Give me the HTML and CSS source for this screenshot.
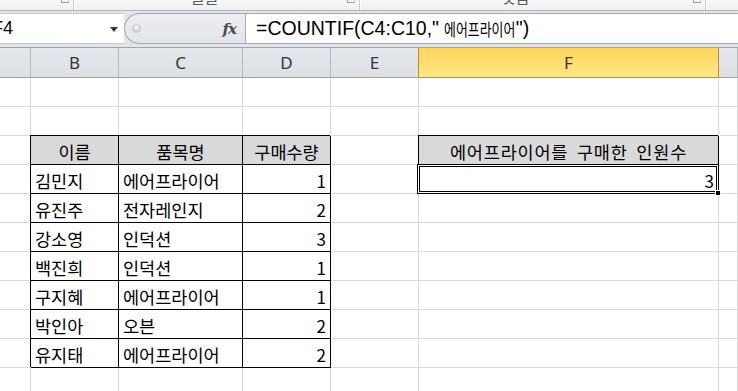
FILE: index.html
```html
<!DOCTYPE html>
<html lang="ko">
<head>
<meta charset="utf-8">
<link rel="stylesheet" href="styles.css">
</head>
<body>
<div class="app">
  <div class="ribbon">
    <div class="rg rg1"><span class="launch"></span></div>
    <div class="rg rg2"><span class="rlabel">글꼴</span><span class="launch"></span></div>
    <div class="rg rg3"><span class="rlabel">맞춤</span><span class="launch"></span></div>
    <div class="rg rg4"></div>
  </div>
  <div class="fbar">
    <div class="namebox"><span class="nb-text">F4</span><span class="nb-arrow"></span></div>
    <div class="pill"><span class="pill-dot"></span><span class="fx">fx</span></div>
    <div class="formula"><span>=COUNTIF(C4:C10,"</span><span class="ko">에어프라이어</span><span>")</span></div>
  </div>
  <div class="sheet">
    <div class="ch"></div><div class="ch">B</div><div class="ch">C</div><div class="ch">D</div><div class="ch">E</div><div class="ch sel">F</div><div class="ch"></div>

    <div class="c"></div><div class="c"></div><div class="c"></div><div class="c"></div><div class="c"></div><div class="c"></div><div class="c"></div>
    <div class="c"></div><div class="c"></div><div class="c"></div><div class="c"></div><div class="c"></div><div class="c"></div><div class="c"></div>

    <div class="c"></div><div class="c t th">이름</div><div class="c t th">품목명</div><div class="c t th">구매수량</div><div class="c"></div><div class="c t th wide">에어프라이어를 구매한 인원수</div><div class="c"></div>

    <div class="c"></div><div class="c t">김민지</div><div class="c t">에어프라이어</div><div class="c t num">1</div><div class="c"></div><div class="c t num active">3<span class="selbox"></span><span class="handle"></span></div><div class="c"></div>
    <div class="c"></div><div class="c t">유진주</div><div class="c t">전자레인지</div><div class="c t num">2</div><div class="c"></div><div class="c"></div><div class="c"></div>
    <div class="c"></div><div class="c t">강소영</div><div class="c t">인덕션</div><div class="c t num">3</div><div class="c"></div><div class="c"></div><div class="c"></div>
    <div class="c"></div><div class="c t">백진희</div><div class="c t">인덕션</div><div class="c t num">1</div><div class="c"></div><div class="c"></div><div class="c"></div>
    <div class="c"></div><div class="c t">구지혜</div><div class="c t">에어프라이어</div><div class="c t num">1</div><div class="c"></div><div class="c"></div><div class="c"></div>
    <div class="c"></div><div class="c t">박인아</div><div class="c t">오븐</div><div class="c t num">2</div><div class="c"></div><div class="c"></div><div class="c"></div>
    <div class="c"></div><div class="c t">유지태</div><div class="c t">에어프라이어</div><div class="c t num">2</div><div class="c"></div><div class="c"></div><div class="c"></div>

    <div class="c"></div><div class="c"></div><div class="c"></div><div class="c"></div><div class="c"></div><div class="c"></div><div class="c"></div>
  </div>
</div>
</body>
</html>
```

FILE: styles.css
```css
* { box-sizing: border-box; }
html, body { margin: 0; padding: 0; }
body {
  width: 738px;
  height: 391px;
  overflow: hidden;
  background: #fff;
  font-family: "Noto Sans CJK KR", "Noto Sans", sans-serif;
}
.app { width: 738px; height: 391px; overflow: hidden; }

/* ribbon remnant */
.ribbon {
  height: 11px;
  display: flex;
  background: linear-gradient(#f6f7f8, #eef0f2);
  border-bottom: 1px solid #b3b7bc;
  overflow: hidden;
}
.rg {
  position: relative;
  display: flex;
  justify-content: flex-end;
  border-right: 1px solid #c9ccd0;
  box-shadow: 1px 0 0 #fafbfc;
}
.rg1 { width: 74px; padding-right: 4px; }
.rg2 { width: 286px; padding-right: 4px; }
.rg3 { width: 346px; padding-right: 4px; }
.rg4 { flex: 1; border-right: 0; box-shadow: none; }
.rlabel {
  margin-right: auto;
  margin-top: -12px;
  font-size: 15px;
  line-height: 17px;
  color: #5a5a5a;
}
.rg2 .rlabel { padding-left: 117px; }
.rg3 .rlabel { padding-left: 142px; }
.launch {
  width: 8px;
  height: 3px;
  border-left: 1px solid #9a9ea3;
  border-bottom: 1px solid #9a9ea3;
  border-right: 1px solid #c4c7cb;
}

/* formula bar */
.fbar {
  height: 37px;
  display: flex;
  padding: 2px 0 2px 0;
  background: #e1e4e8;
  border-bottom: 1px solid #a1a5aa;
}
.namebox {
  width: 124px;
  height: 31px;
  background: #fff;
  border-top: 1px solid #c3c6ca;
  border-bottom: 1px solid #c3c6ca;
  display: flex;
  align-items: center;
  justify-content: space-between;
  overflow: hidden;
  font-family: "Liberation Sans", sans-serif;
  font-size: 18px;
}
.nb-text { margin-left: -8px; color: #000; }
.nb-arrow {
  width: 0; height: 0;
  margin-right: 6px;
  margin-top: 2px;
  border-left: 4.5px solid transparent;
  border-right: 4.5px solid transparent;
  border-top: 5px solid #3a3a3a;
}
.pill {
  width: 121px;
  height: 31px;
  display: flex;
  align-items: center;
  justify-content: space-between;
  padding: 0 9px 0 7px;
  background: linear-gradient(#eceef1, #e2e5e9);
  border: 1px solid #a6aaaf;
  border-right: 0;
  border-radius: 16px 0 0 16px;
}
.pill-dot {
  width: 9px; height: 9px;
  border-radius: 50%;
  background: radial-gradient(circle at 50% 35%, #ffffff, #c2c5c9 80%);
  border: 1px solid #c7cacd;
}
.fx {
  font-family: "DejaVu Serif", "Liberation Serif", serif;
  font-style: italic;
  font-weight: bold;
  font-size: 15px;
  color: #4a4a4a;
  letter-spacing: -1px;
}
.formula {
  flex: 1;
  height: 31px;
  background: #fff;
  border: 1px solid #a6aaaf;
  border-right: 0;
  padding-left: 10px;
  display: flex;
  align-items: center;
  font-family: "Liberation Sans", "Noto Sans CJK KR", sans-serif;
  font-size: 19.5px;
  color: #000;
  white-space: nowrap;
}
.formula .ko {
  display: inline-block;
  font-family: "Noto Sans CJK KR", sans-serif;
  font-size: 17px;
  transform: scaleX(0.76);
  transform-origin: 0 50%;
  margin-left: 5px;
  margin-right: -22px;
}

/* sheet */
.sheet {
  display: grid;
  grid-template-columns: 31px 88px 124px 88px 88px 300px 1fr;
  grid-template-rows: 30px;
  grid-auto-rows: 29px;
}
.ch {
  background: linear-gradient(#e3e6ea, #dde1e6);
  border-right: 1px solid #b4b9be;
  border-bottom: 1px solid #9ea3a8;
  display: flex;
  align-items: center;
  justify-content: center;
  font-family: "Noto Sans", sans-serif;
  font-size: 17px;
  color: #333;
}
.ch.sel {
  background: linear-gradient(#ffd45b, #ffe884);
  border-right-color: #c38c3a;
  border-bottom-color: #c38c3a;
  box-shadow: -1px 0 0 #c38c3a;
}
.c {
  border-right: 1px solid #dadada;
  border-bottom: 1px solid #dadada;
  display: flex;
  align-items: center;
  padding: 2px 4px 0 4px;
  font-size: 17.5px;
  color: #000;
  white-space: nowrap;
}
.t {
  border-right-color: #000;
  border-bottom-color: #000;
  box-shadow: -1px -1px 0 #000;
}
.th {
  background: #d9d9d9;
  justify-content: center;
  padding: 2px 0 0 0;
}
.wide {
  letter-spacing: 0.8px;
  word-spacing: 3px;
}
.num {
  justify-content: flex-end;
  font-size: 17px;
}
.active { position: relative; }
.selbox {
  position: absolute;
  left: -2px; top: -1px; right: -1px; bottom: -1px;
  border: 1px solid #000;
  box-shadow: inset 0 0 0 1px #fff, inset 0 0 0 2px #000;
}
.handle {
  position: absolute;
  right: -3px; bottom: -3px;
  width: 6px; height: 6px;
  background: #000;
  border: 1px solid #fff;
}
```
